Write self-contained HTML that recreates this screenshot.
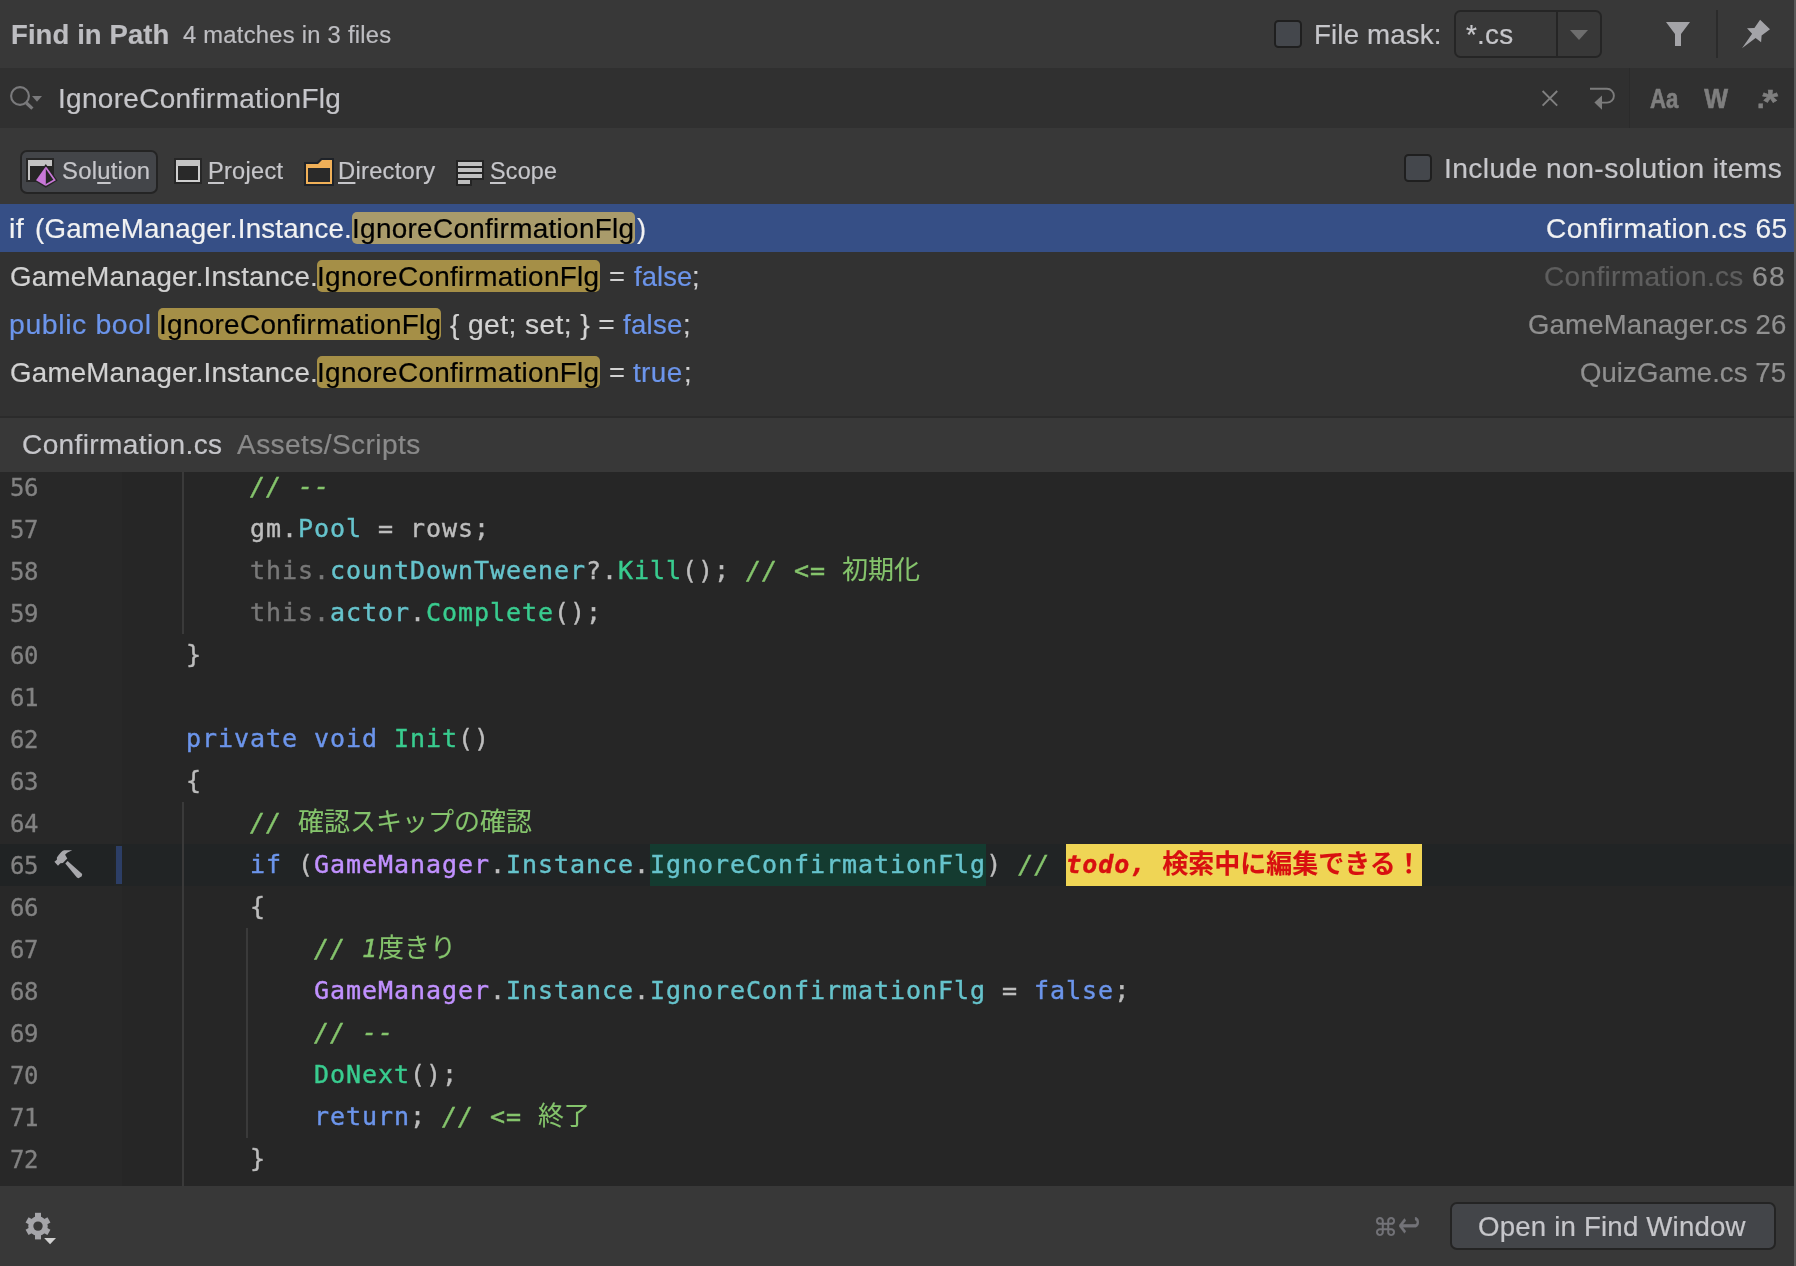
<!DOCTYPE html>
<html lang="ja">
<head>
<meta charset="utf-8">
<title>Find in Path</title>
<style>
html,body{margin:0;padding:0;background:#383838;}
body{width:1796px;height:1266px;position:relative;overflow:hidden;font-family:"Liberation Sans","Noto Sans CJK JP",sans-serif;color:#c6c6ca;}
.abs,.t{position:absolute;}
.t{-webkit-text-stroke:0.2px;will-change:transform;white-space:pre;line-height:1;transform-origin:0 0;}
.t u{text-decoration:underline;text-decoration-thickness:2px;text-underline-offset:3px;}
svg{will-change:transform;position:absolute;left:0;top:0;overflow:visible;}
#hdr{left:0;top:0;width:1794px;height:68px;background:#383838;}
#srch{left:0;top:68px;width:1794px;height:60px;background:#303030;}
#scope{left:0;top:128px;width:1794px;height:76px;background:#383838;}
#list{left:0;top:204px;width:1794px;height:212px;background:#323232;}
#split{left:0;top:416px;width:1794px;height:2px;background:#2b2b2b;}
#phdr{left:0;top:418px;width:1794px;height:54px;background:#383838;}
#ed{left:0;top:472px;width:1794px;height:714px;background:#262626;overflow:hidden;}
#bot{left:0;top:1186px;width:1794px;height:80px;background:#383838;}
#rb{left:1794px;top:0;width:2px;height:1266px;background:#595959;}
.cb{box-sizing:border-box;border:2px solid #1f1f1f;background:#44474c;border-radius:4.5px;}
.combo{box-sizing:border-box;border:2px solid #252525;background:#383838;border-radius:6.5px;}
.btn{box-sizing:border-box;border:2px solid #242424;background:#434549;border-radius:7px;}
.hl{position:absolute;height:32px;border-radius:5px;background:#a58f47;}
.ln{-webkit-text-stroke:0.42px;will-change:transform;position:absolute;left:58px;height:42px;line-height:42px;white-space:pre;font-family:"DejaVu Sans Mono","Noto Sans CJK JP",monospace;font-size:25px;letter-spacing:0.949px;color:#bdbdbd;}
.j{-webkit-text-stroke:0.1px;letter-spacing:0;font-style:normal;font-size:26px;line-height:1;}
.num{-webkit-text-stroke:0.3px;will-change:transform;position:absolute;left:10px;height:42px;line-height:42px;white-space:pre;font-family:"DejaVu Sans Mono",monospace;font-size:24px;letter-spacing:-0.45px;color:#828282;}
.c{color:#85c46c;font-style:oblique;}
.k{color:#6c95eb;}
.cl{color:#c191ff;}
.p{color:#66c3cc;}
.m{color:#39cc8f;}
.d{color:#787878;}
.td{color:#d81010;font-weight:700;font-style:oblique;}
</style>
</head>
<body>
<div id="hdr" class="abs"></div>
<div id="srch" class="abs"></div>
<div id="scope" class="abs"></div>
<div id="list" class="abs"></div>
<div id="split" class="abs"></div>
<div id="phdr" class="abs"></div>
<div id="bot" class="abs"></div>
<div id="rb" class="abs"></div>
<div class="abs" style="left:0;top:204px;width:1794px;height:48px;background:#364f86"></div>
<div class="hl" style="left:352px;top:212px;width:283px;background:#a99b6b"></div>
<div class="hl" style="left:317px;top:260px;width:283px"></div>
<div class="hl" style="left:158px;top:308px;width:283px"></div>
<div class="hl" style="left:317px;top:356px;width:283px"></div>
<div class="abs cb" style="left:1274px;top:20px;width:28px;height:28px"></div>
<div class="abs cb" style="left:1404px;top:154px;width:28px;height:28px"></div>
<div class="abs combo" style="left:1454px;top:10px;width:148px;height:48px"></div>
<div class="abs" style="left:1556px;top:12px;width:2px;height:44px;background:#252525"></div>
<div class="abs" style="left:1716px;top:10px;width:2px;height:48px;background:#2b2b2b"></div>
<div class="abs" style="left:1629px;top:68px;width:1px;height:60px;background:#2b2b2b"></div>
<div class="abs btn" style="left:20px;top:150px;width:138px;height:44px"></div>
<div class="abs btn" style="left:1450px;top:1202px;width:326px;height:48px"></div>
<div id="ed" class="abs">
<div class="abs" style="left:0;top:0;width:122px;height:714px;background:#282828"></div>
<div class="abs" style="left:0;top:372px;width:1794px;height:42px;background:#212425"></div>
<div class="abs" style="left:0;top:372px;width:114px;height:42px;background:#202324"></div>
<div class="abs" style="left:116px;top:374px;width:6px;height:38px;background:#2c3e66"></div>
<div class="abs" style="left:650px;top:372px;width:336px;height:42px;background:#143b30"></div>
<div class="abs" style="left:1066px;top:372px;width:356px;height:42px;background:#efd555"></div>
<div class="abs" style="left:182px;top:0;width:2px;height:162px;background:#3a3a3a"></div>
<div class="abs" style="left:182px;top:330px;width:2px;height:384px;background:#3a3a3a"></div>
<div class="abs" style="left:246px;top:456px;width:2px;height:210px;background:#3a3a3a"></div>
<div class="num" style="top:-5px">56</div>
<div class="ln" style="top:-6px">            <span class="c">// --</span></div>
<div class="num" style="top:37px">57</div>
<div class="ln" style="top:36px">            gm.<span class="p">Pool</span> = rows;</div>
<div class="num" style="top:79px">58</div>
<div class="ln" style="top:78px">            <span class="d">this.</span><span class="p">countDownTweener</span>?.<span class="m">Kill</span>(); <span class="c">// &lt;= <span class="j">初期化</span></span></div>
<div class="num" style="top:121px">59</div>
<div class="ln" style="top:120px">            <span class="d">this.</span><span class="p">actor</span>.<span class="m">Complete</span>();</div>
<div class="num" style="top:163px">60</div>
<div class="ln" style="top:162px">        }</div>
<div class="num" style="top:205px">61</div>
<div class="num" style="top:247px">62</div>
<div class="ln" style="top:246px">        <span class="k">private</span> <span class="k">void</span> <span class="m">Init</span>()</div>
<div class="num" style="top:289px">63</div>
<div class="ln" style="top:288px">        {</div>
<div class="num" style="top:331px">64</div>
<div class="ln" style="top:330px">            <span class="c">// <span class="j">確認スキップの確認</span></span></div>
<div class="num" style="top:373px">65</div>
<div class="ln" style="top:372px">            <span class="k">if</span> (<span class="cl">GameManager</span>.<span class="p">Instance</span>.<span class="p">IgnoreConfirmationFlg</span>) <span class="c">// </span><span class="td">todo, <span class="j">検索中に編集できる！</span></span></div>
<div class="num" style="top:415px">66</div>
<div class="ln" style="top:414px">            {</div>
<div class="num" style="top:457px">67</div>
<div class="ln" style="top:456px">                <span class="c">// 1<span class="j">度きり</span></span></div>
<div class="num" style="top:499px">68</div>
<div class="ln" style="top:498px">                <span class="cl">GameManager</span>.<span class="p">Instance</span>.<span class="p">IgnoreConfirmationFlg</span> = <span class="k">false</span>;</div>
<div class="num" style="top:541px">69</div>
<div class="ln" style="top:540px">                <span class="c">// --</span></div>
<div class="num" style="top:583px">70</div>
<div class="ln" style="top:582px">                <span class="m">DoNext</span>();</div>
<div class="num" style="top:625px">71</div>
<div class="ln" style="top:624px">                <span class="k">return</span>; <span class="c">// &lt;= <span class="j">終了</span></span></div>
<div class="num" style="top:667px">72</div>
<div class="ln" style="top:666px">            }</div>
</div>

<svg width="1796" height="1266" viewBox="0 0 1796 1266">
<!-- search icon -->
<g stroke="#7a7a7c" fill="none">
<circle cx="20" cy="96" r="8.9" stroke-width="2.1"/>
<path d="M26.4 103 L32.4 108.6" stroke-width="3.2"/>
</g>
<path d="M32 96 H42 L37 101.7 Z" fill="#7a7a7c"/>
<!-- combobox arrow -->
<path d="M1570 30 H1588 L1579 40 Z" fill="#6e6e6e"/>
<!-- filter -->
<path d="M1666 22 H1690 L1681 34 V46 H1675 V34 Z" fill="#a4a4a8"/>
<!-- pin -->
<path d="M1760.1 19.7 L1770 29.3 L1761.6 35.4 L1761.1 42.3 L1755.6 38.1 L1742 48.3 L1752.1 33.8 L1747 28.2 L1754.4 28 Z" fill="#a4a4a8"/>
<!-- clear x -->
<path d="M1542.6 91 L1557.2 105.6 M1557.2 91 L1542.6 105.6" stroke="#808080" stroke-width="1.9" fill="none"/>
<!-- wrap arrow -->
<path d="M1590 88.8 H1607 A6.9 6.9 0 0 1 1607 102.6 H1601" stroke="#7c7c7c" stroke-width="1.9" fill="none"/>
<path d="M1594.4 102.6 L1602 95.4 V109.8 Z" fill="#7c7c7c"/>
<!-- Aa W .* -->
<g font-family="Liberation Sans, sans-serif" font-weight="700" fill="#7f7f7f" stroke="#7f7f7f" stroke-width="0.6">
<text x="1650" y="107.6" font-size="27" textLength="28.4" lengthAdjust="spacingAndGlyphs">Aa</text>
<text x="1704.2" y="107.6" font-size="27" textLength="23.8" lengthAdjust="spacingAndGlyphs">W</text>
<text x="1757" y="107.6" font-size="27">.</text>
<text x="1762.5" y="113" font-size="34" textLength="15.5" lengthAdjust="spacingAndGlyphs">*</text>
</g>
<!-- solution icon -->
<rect x="26" y="158" width="28" height="24" fill="#262626"/>
<path d="M28 160 H52 V166 H30 V180 H28 Z" fill="#c4c4c4"/>
<path d="M45.8 164 L57.6 180.6 L45.8 187.8 L34 180.6 Z" fill="#262626"/>
<path d="M45.8 166.5 L36 180.3 L45.8 185.9 Z" fill="#c878d8"/>
<path d="M45.8 167.5 L54.6 180 L45.8 184.9" stroke="#c878d8" stroke-width="1.7" fill="none" stroke-linejoin="miter"/>
<!-- project icon -->
<rect x="174" y="158" width="28" height="26" fill="#262626"/>
<rect x="176" y="160" width="24" height="22" fill="#cfcfcf"/>
<rect x="176" y="160" width="24" height="6" fill="#c4c4c4"/>
<rect x="178" y="166" width="20" height="14" fill="#292929"/>
<!-- directory icon -->
<path d="M304 162 H317 L321 158 H334 V186 H304 Z" fill="#1e2228"/>
<path d="M306 164 H318 L322 160 H332 V184 H306 Z" fill="#f0b058"/>
<rect x="308" y="168" width="22" height="14" fill="#292929"/>
<!-- scope icon -->
<path d="M456 160 H484 V180 H472 V186 H456 Z" fill="#242424"/>
<g fill="#bebebe">
<rect x="458" y="162" width="24" height="4"/>
<rect x="458" y="168" width="24" height="4"/>
<rect x="458" y="174" width="24" height="4"/>
<rect x="458" y="180" width="12" height="4"/>
</g>
<!-- hammer -->
<g fill="#a8a8ac">
<path d="M72.2 850.2 H64.3 Q61.5 850.6 56.9 857.6 V859.8 L54.4 861.8 L58 865.8 L60.4 863.3 L62.9 862.9 L67.3 858.4 L65.1 854.7 Q66.5 852.6 72.2 850.2 Z"/>
<path d="M65.3 863.4 L67.6 861.1 L82.2 874 L81.8 876.2 L78.5 878.2 L76.9 877.4 Z"/>
</g>
<!-- gear -->
<g transform="translate(38 1226.1)" fill="#a5a5a9">
<circle r="7.2" fill="none" stroke="#a5a5a9" stroke-width="5.2"/>
<rect x="-3" y="-13.3" width="6" height="26.6"/>
<rect x="-3" y="-12.6" width="6" height="25.2" transform="rotate(60)"/>
<rect x="-3" y="-12.6" width="6" height="25.2" transform="rotate(120)"/>
<circle r="4.7" fill="#383838"/>
</g>
<path d="M44.1 1238 H56 L50.05 1244.2 Z" fill="#d0d0d0"/>
</svg>

<div class="t" style="left:11.3px;top:20.89px;font-size:27.3px;font-weight:700;color:#bdbdc1;letter-spacing:0.099px;transform:scaleX(1.0069);">Find in Path</div>
<div class="t" style="left:183.0px;top:24.45px;font-size:23.1px;color:#bdbdc1;letter-spacing:0.256px;transform:scaleX(1.0279);">4 matches in 3 files</div>
<div class="t" style="left:1313.7px;top:20.59px;font-size:27.3px;color:#c6c6ca;letter-spacing:0.153px;transform:scaleX(1.0142);">File mask:</div>
<div class="t" style="left:1465.6px;top:20.79px;font-size:27.3px;color:#c6c6ca;letter-spacing:0.261px;transform:scaleX(1.0205);">*.cs</div>
<div class="t" style="left:57.5px;top:84.89px;font-size:27.3px;color:#c6c6ca;letter-spacing:0.318px;transform:scaleX(1.0234);">IgnoreConfirmationFlg</div>
<div class="t" style="left:61.9px;top:160.45px;font-size:23.1px;color:#c6c6ca;letter-spacing:0.263px;transform:scaleX(1.0302);">Sol<u>u</u>tion</div>
<div class="t" style="left:207.6px;top:160.45px;font-size:23.1px;color:#c6c6ca;letter-spacing:0.278px;transform:scaleX(1.0193);"><u>P</u>roject</div>
<div class="t" style="left:337.9px;top:160.45px;font-size:23.1px;color:#c6c6ca;letter-spacing:0.255px;transform:scaleX(1.0283);"><u>D</u>irectory</div>
<div class="t" style="left:490.0px;top:160.45px;font-size:23.1px;color:#c6c6ca;letter-spacing:0.248px;transform:scaleX(1.0078);"><u>S</u>cope</div>
<div class="t" style="left:1443.9px;top:154.89px;font-size:27.3px;color:#c6c6ca;letter-spacing:0.391px;transform:scaleX(1.0336);">Include non-solution items</div>
<div class="t" style="left:9.2px;top:214.89px;font-size:27.3px;color:#f2f2f2;letter-spacing:0.285px;transform:scaleX(1.0542);">if</div>
<div class="t" style="left:35.3px;top:214.89px;font-size:27.3px;color:#f2f2f2;letter-spacing:0.211px;transform:scaleX(1.014);">(GameManager.Instance.</div>
<div class="t" style="left:352.3px;top:214.89px;font-size:27.3px;color:#000;letter-spacing:0.293px;transform:scaleX(1.0225);">IgnoreConfirmationFlg</div>
<div class="t" style="left:636.5px;top:214.89px;font-size:27.3px;color:#f2f2f2;">)</div>
<div class="t" style="left:1546.0px;top:214.89px;font-size:27.3px;color:#f2f2f2;letter-spacing:0.4px;transform:scaleX(1.0288);">Confirmation.cs 65</div>
<div class="t" style="left:10.2px;top:262.89px;font-size:27.3px;color:#d2d2d2;letter-spacing:0.222px;transform:scaleX(1.0144);">GameManager.Instance.</div>
<div class="t" style="left:317.2px;top:262.89px;font-size:27.3px;color:#000;letter-spacing:0.293px;transform:scaleX(1.0225);">IgnoreConfirmationFlg</div>
<div class="t" style="left:609.0px;top:262.89px;font-size:27.3px;color:#d2d2d2;">=</div>
<div class="t" style="left:634.0px;top:262.89px;font-size:27.3px;color:#6c95eb;letter-spacing:0.075px;transform:scaleX(1.0026);">false</div>
<div class="t" style="left:692.3px;top:262.89px;font-size:27.3px;color:#d2d2d2;">;</div>
<div class="t" style="left:1543.8px;top:262.89px;font-size:27.3px;color:#5e5e5e;letter-spacing:0.334px;transform:scaleX(1.0261);">Confirmation.cs</div>
<div class="t" style="left:1752.0px;top:262.89px;font-size:27.3px;color:#909090;letter-spacing:1.25px;transform:scaleX(1.0397);">68</div>
<div class="t" style="left:9.2px;top:310.89px;font-size:27.3px;color:#6c95eb;letter-spacing:0.566px;transform:scaleX(1.0429);">public bool</div>
<div class="t" style="left:158.8px;top:310.89px;font-size:27.3px;color:#000;letter-spacing:0.293px;transform:scaleX(1.0225);">IgnoreConfirmationFlg</div>
<div class="t" style="left:450.0px;top:310.89px;font-size:27.3px;color:#d2d2d2;letter-spacing:0.373px;transform:scaleX(1.034);">{ get; set; } =</div>
<div class="t" style="left:623.4px;top:310.89px;font-size:27.3px;color:#6c95eb;letter-spacing:0.272px;transform:scaleX(1.0096);">false</div>
<div class="t" style="left:682.7px;top:310.89px;font-size:27.3px;color:#d2d2d2;">;</div>
<div class="t" style="left:1527.8px;top:310.89px;font-size:27.3px;color:#909090;letter-spacing:0.161px;transform:scaleX(1.0091);">GameManager.cs 26</div>
<div class="t" style="left:10.2px;top:358.89px;font-size:27.3px;color:#d2d2d2;letter-spacing:0.222px;transform:scaleX(1.0144);">GameManager.Instance.</div>
<div class="t" style="left:317.2px;top:358.89px;font-size:27.3px;color:#000;letter-spacing:0.293px;transform:scaleX(1.0225);">IgnoreConfirmationFlg</div>
<div class="t" style="left:608.7px;top:358.89px;font-size:27.3px;color:#d2d2d2;">=</div>
<div class="t" style="left:633.4px;top:358.89px;font-size:27.3px;color:#6c95eb;letter-spacing:0.358px;transform:scaleX(1.0228);">true</div>
<div class="t" style="left:684.3px;top:358.89px;font-size:27.3px;color:#d2d2d2;">;</div>
<div class="t" style="left:1579.7px;top:358.89px;font-size:27.3px;color:#909090;letter-spacing:0.084px;transform:scaleX(1.0077);">QuizGame.cs 75</div>
<div class="t" style="left:22.0px;top:431.09px;font-size:27.3px;color:#c6c6ca;letter-spacing:0.368px;transform:scaleX(1.0274);">Confirmation.cs</div>
<div class="t" style="left:236.8px;top:431.09px;font-size:27.3px;color:#8a8a8a;letter-spacing:0.388px;transform:scaleX(1.0297);">Assets/Scripts</div>
<div class="t" style="left:1478.0px;top:1212.89px;font-size:27.3px;color:#c6c6ca;letter-spacing:0.187px;transform:scaleX(1.0123);">Open in Find Window</div>
<div class="t" style="left:1372.7px;top:1215.2px;font-family:&quot;DejaVu Sans&quot;,sans-serif;font-size:25px;color:#737378">⌘</div>
<div class="t" style="left:1398.4px;top:1206.5px;font-family:&quot;DejaVu Sans&quot;,sans-serif;font-size:27px;color:#737378;transform:scaleY(1.3)">↩</div>
</body>
</html>
